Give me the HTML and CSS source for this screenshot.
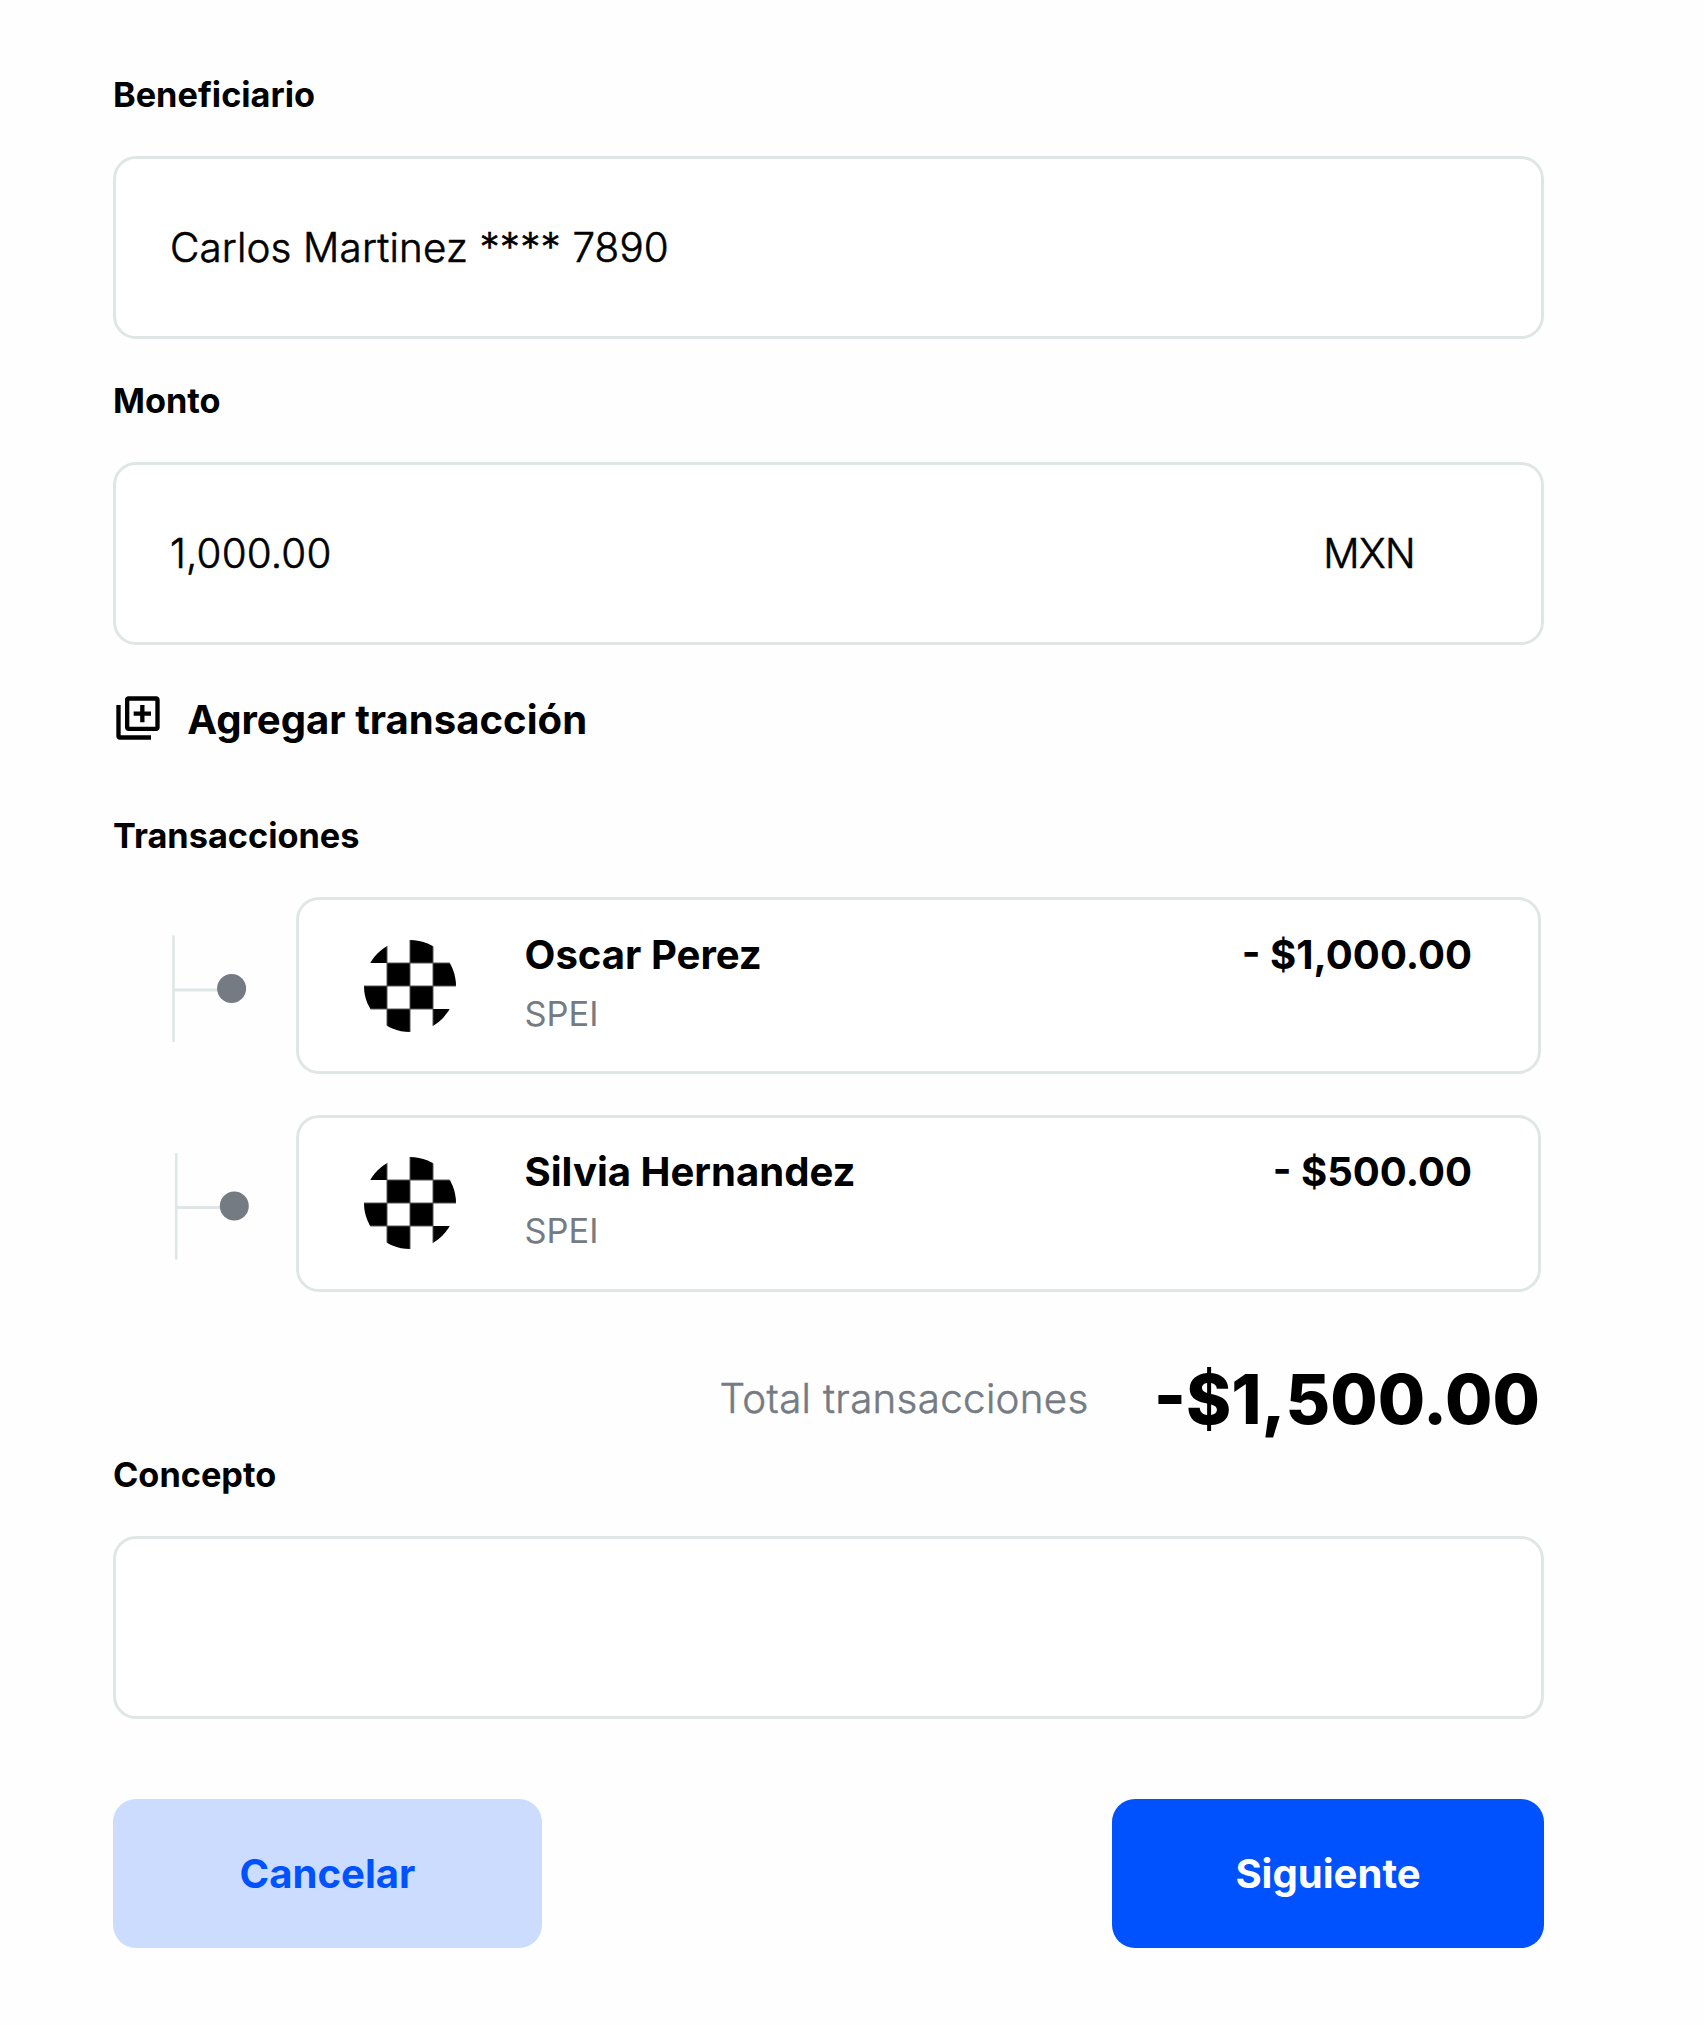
FILE: index.html
```
<!DOCTYPE html>
<html lang="es">
<head>
  <meta charset="utf-8">
  <title>Transferencia</title>
  <link rel="stylesheet" href="styles.css">
</head>
<body>
  <svg class="defs" width="0" height="0" aria-hidden="true">
    <defs>
      <clipPath id="round"><circle cx="46" cy="46" r="46"/></clipPath>
      <symbol id="checker" viewBox="0 0 92 92">
        <g clip-path="url(#round)">
          <path d="M0 0h23v23H0zM46 0h23v23H46zM23 23h23v23H23zM69 23h23v23H69zM0 46h23v23H0zM46 46h23v23H46zM23 69h23v23H23zM69 69h23v23H69z"/>
          <path class="checker-grid" d="M23 23H92M0 46H92M0 69H69M23 0V92M46 0V92M69 0V92"/>
          <path class="checker-gap" d="M24 0h21v22H24zM70 0h22v22H70zM0 24h22v21H0zM47 24h21v21H47zM24 47h21v21H24zM70 47h22v21H70zM0 70h22v22H0zM47 70h21v22H47z"/>
        </g>
      </symbol>
      <symbol id="branch" viewBox="0 0 183 177">
        <path class="branch-line" d="M60.5 38.5V145"/>
        <path class="branch-line branch-arm" d="M60.5 93H110"/>
        <circle class="branch-dot" cx="118.6" cy="91.6" r="14.5"/>
      </symbol>
    </defs>
  </svg>

  <main class="form">
    <section class="group">
      <div class="label">Beneficiario</div>
      <div class="field"><span>Carlos Martinez **** 7890</span></div>
    </section>

    <section class="group group-next">
      <div class="label">Monto</div>
      <div class="field"><span>1,000.00</span><span class="currency">MXN</span></div>
    </section>

    <div class="add">
      <svg class="add-icon" viewBox="0 0 24 24" aria-hidden="true">
        <path d="M4 6H2v14.4c0 .9.7 1.6 1.6 1.6H18v-2H4V6zM20.4 2H7.6C6.7 2 6 2.7 6 3.6v12.8c0 .9.7 1.6 1.6 1.6h12.8c.9 0 1.6-.7 1.6-1.6V3.6c0-.9-.7-1.6-1.6-1.6zM20 16H8V4h12v12zM13 14h2v-3h3V9h-3V6h-2v3h-3v2h3v3z"/>
      </svg>
      <span class="add-text">Agregar transacción</span>
    </div>

    <section class="group group-list">
      <div class="label">Transacciones</div>
      <div class="list">
        <div class="row">
          <svg class="branch" aria-hidden="true"><use href="#branch"/></svg>
          <article class="card">
            <svg class="avatar" aria-hidden="true"><use href="#checker"/></svg>
            <div class="who">
              <span class="name">Oscar Perez</span>
              <span class="kind">SPEI</span>
            </div>
            <span class="amount">- $1,000.00</span>
          </article>
        </div>
        <div class="row">
          <svg class="branch" aria-hidden="true"><use href="#branch" x="2.7" y="-0.5"/></svg>
          <article class="card card-last">
            <svg class="avatar" aria-hidden="true"><use href="#checker"/></svg>
            <div class="who">
              <span class="name">Silvia Hernandez</span>
              <span class="kind">SPEI</span>
            </div>
            <span class="amount">- $500.00</span>
          </article>
        </div>
      </div>
      <div class="total">
        <span class="total-label">Total transacciones</span>
        <span class="total-sum">-$1,500.00</span>
      </div>
    </section>

    <section class="group group-concept">
      <div class="label">Concepto</div>
      <div class="field"></div>
    </section>

    <div class="actions">
      <button class="button button-cancel" type="button">Cancelar</button>
      <button class="button button-next" type="button">Siguiente</button>
    </div>
  </main>
</body>
</html>
```
FILE: styles.css
```
* {
  box-sizing: border-box;
}

body {
  margin: 0;
  min-height: 2025px;
  background: #fefefe;
  color: #000;
  font-family: Inter, "Liberation Sans", sans-serif;
}

.defs {
  display: block;
}

.form {
  width: 1431px;
  margin-left: 113px;
  padding-top: 73.5px;
}

.group-next {
  margin-top: 40.5px;
}

.group-list {
  margin-top: 68.5px;
}

.group-concept {
  margin-top: 11.5px;
}

.label {
  margin-bottom: 40.5px;
  font-size: 34.3px;
  font-weight: 700;
  line-height: 42px;
}

.field {
  display: flex;
  align-items: center;
  justify-content: space-between;
  height: 183px;
  padding: 0 126px 0 54px;
  border: 3px solid #e0e6e5;
  border-radius: 23px;
  background: #fff;
  font-size: 40.3px;
  font-weight: 300;
  letter-spacing: 0.19px;
  line-height: 48px;
  -webkit-text-stroke: 0.6px currentColor;
}

.currency {
  letter-spacing: -0.6px;
}

.add {
  display: flex;
  height: 54px;
  margin: 47px 0 0 -0.8px;
}

.add-icon {
  width: 52px;
  height: 52px;
}

.add-text {
  margin-left: 23px;
  font-size: 40.1px;
  font-weight: 700;
  line-height: 56px;
}

.list {
  display: flex;
  flex-direction: column;
  gap: 41px;
  width: 1428px;
}

.row {
  display: grid;
  grid-template-columns: 183px 1fr;
  height: 177px;
}

.branch {
  width: 183px;
  height: 177px;
  overflow: visible;
}

.branch-line {
  fill: none;
  stroke: #e0e6e5;
  stroke-width: 2.6;
}

.branch-arm {
  stroke-width: 2.8;
}

.branch-dot {
  fill: #757b82;
}

.card {
  display: flex;
  align-items: flex-start;
  padding: 30.5px 66px 0 65px;
  border: 3px solid #e0e6e5;
  border-radius: 23px;
  background: #fff;
}

.card-last {
  padding-top: 29.5px;
}

.avatar {
  width: 92px;
  height: 92px;
  margin-top: 9px;
}

.checker-grid {
  fill: none;
  stroke: #555;
  stroke-width: 1;
}

.checker-gap {
  fill: #fff;
}

.who {
  display: flex;
  flex-direction: column;
  flex: 1;
  gap: 15px;
  margin-left: 68.5px;
}

.name,
.amount {
  font-size: 40.1px;
  font-weight: 700;
  line-height: 48px;
}

.kind {
  color: #757b82;
  font-size: 34.4px;
  line-height: 40px;
}

.total {
  display: flex;
  align-items: center;
  justify-content: flex-end;
  gap: 65px;
  width: 1427px;
  height: 84px;
  margin-top: 66px;
}

.total-label {
  padding-bottom: 2px;
  color: #757b82;
  font-size: 40.3px;
  font-weight: 300;
  letter-spacing: 0.32px;
  line-height: 48px;
  -webkit-text-stroke: 0.5px currentColor;
}

.total-sum {
  font-size: 68.6px;
  font-weight: 800;
  line-height: 84px;
}

.actions {
  display: flex;
  justify-content: space-between;
  margin-top: 80px;
}

.button {
  height: 149px;
  padding: 0;
  border: 0;
  border-radius: 23px;
  font: 700 40.1px/48px Inter, "Liberation Sans", sans-serif;
}

.button-cancel {
  width: 429px;
  background: #ccdcff;
  color: #0052ff;
}

.button-next {
  width: 432px;
  background: #0052ff;
  color: #fff;
}
```
